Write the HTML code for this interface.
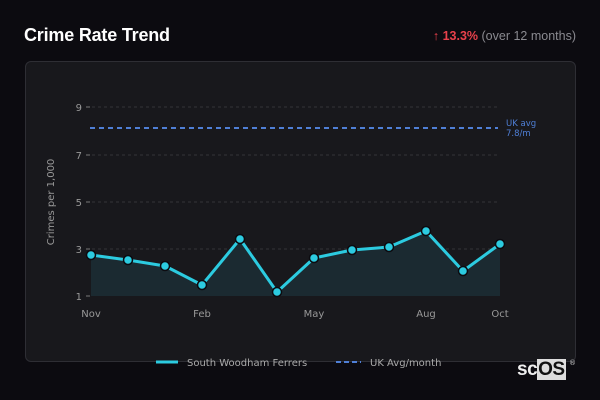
<!DOCTYPE html>
<html><head><style>
body{margin:0;width:600px;height:400px;background:#0c0b10;font-family:"Liberation Sans","DejaVu Sans",sans-serif;position:relative;overflow:hidden}
.t{position:absolute;left:24px;top:25px;color:#fff;font-weight:bold;font-size:18px;font-family:"Liberation Sans",sans-serif;letter-spacing:-0.2px}
.r{position:absolute;right:24px;top:29px;font-size:12.5px;color:#8a8a90;font-family:"Liberation Sans",sans-serif}
.r b{color:#e8414b}
.p{position:absolute;left:25px;top:61px;width:549px;height:299px;background:#18181c;border:1px solid #2e2e34;border-radius:6px}
svg{position:absolute;left:0;top:0}
.logo{position:absolute;left:517px;top:359px;font-size:19px;font-weight:bold;color:#eee;font-family:"Liberation Sans",sans-serif;letter-spacing:-0.5px}
.logo span{background:#ddd;color:#111;padding:0 1px}
</style></head><body>
<div class="t">Crime Rate Trend</div>
<div class="r"><b>↑ 13.3%</b> (over 12 months)</div>
<div class="p"></div>
<svg width="600" height="400" font-family="DejaVu Sans, sans-serif">
<g stroke="#333338" stroke-dasharray="3,3" stroke-width="1">
<line x1="92" y1="107" x2="498" y2="107"/><line x1="92" y1="155" x2="498" y2="155"/><line x1="92" y1="202" x2="498" y2="202"/><line x1="92" y1="249" x2="498" y2="249"/>
</g>
<g stroke="#777" stroke-width="1"><line x1="86" y1="107" x2="90" y2="107"/><line x1="86" y1="155" x2="90" y2="155"/><line x1="86" y1="202" x2="90" y2="202"/><line x1="86" y1="249" x2="90" y2="249"/><line x1="86" y1="296" x2="90" y2="296"/></g>
<g fill="#999" font-size="10" text-anchor="end"><text x="82" y="111">9</text><text x="82" y="159">7</text><text x="82" y="206">5</text><text x="82" y="253">3</text><text x="82" y="300">1</text></g>
<text transform="translate(54,202) rotate(-90)" fill="#999" font-size="10" text-anchor="middle">Crimes per 1,000</text>
<g fill="#999" font-size="10" text-anchor="middle"><text x="91" y="317">Nov</text><text x="202" y="317">Feb</text><text x="314" y="317">May</text><text x="426" y="317">Aug</text><text x="500" y="317">Oct</text></g>
<line x1="90" y1="128" x2="498" y2="128" stroke="#4f7fd6" stroke-width="2" stroke-dasharray="5,4"/>
<text x="506" y="126" fill="#4f7fd6" font-size="8.5">UK avg</text><text x="506" y="136" fill="#4f7fd6" font-size="8.5">7.8/m</text>
<polygon fill="#1b2a31" points="91,296 91,255 128,260 165,266 202,285 240,239 277,292 314,258 352,250 389,247 426,231 463,271 500,244 500,296"/>
<polyline fill="none" stroke="#2ccbe0" stroke-width="3" stroke-linejoin="round" points="91,255 128,260 165,266 202,285 240,239 277,292 314,258 352,250 389,247 426,231 463,271 500,244"/>
<g fill="#2ccbe0" stroke="#0c0b10" stroke-width="1.5">
<circle cx="91" cy="255" r="4.5"/><circle cx="128" cy="260" r="4.5"/><circle cx="165" cy="266" r="4.5"/><circle cx="202" cy="285" r="4.5"/><circle cx="240" cy="239" r="4.5"/><circle cx="277" cy="292" r="4.5"/><circle cx="314" cy="258" r="4.5"/><circle cx="352" cy="250" r="4.5"/><circle cx="389" cy="247" r="4.5"/><circle cx="426" cy="231" r="4.5"/><circle cx="463" cy="271" r="4.5"/><circle cx="500" cy="244" r="4.5"/>
</g>
<line x1="156" y1="362" x2="178" y2="362" stroke="#2ccbe0" stroke-width="3"/>
<text x="187" y="366" fill="#aaa" font-size="10">South Woodham Ferrers</text>
<line x1="336" y1="362" x2="361" y2="362" stroke="#4f7fd6" stroke-width="2" stroke-dasharray="5,3"/>
<text x="370" y="366" fill="#aaa" font-size="10">UK Avg/month</text>
<text x="569" y="365" fill="#ccc" font-size="7">®</text>
</svg>
<div class="logo">sc<span>OS</span></div>
</body></html>
